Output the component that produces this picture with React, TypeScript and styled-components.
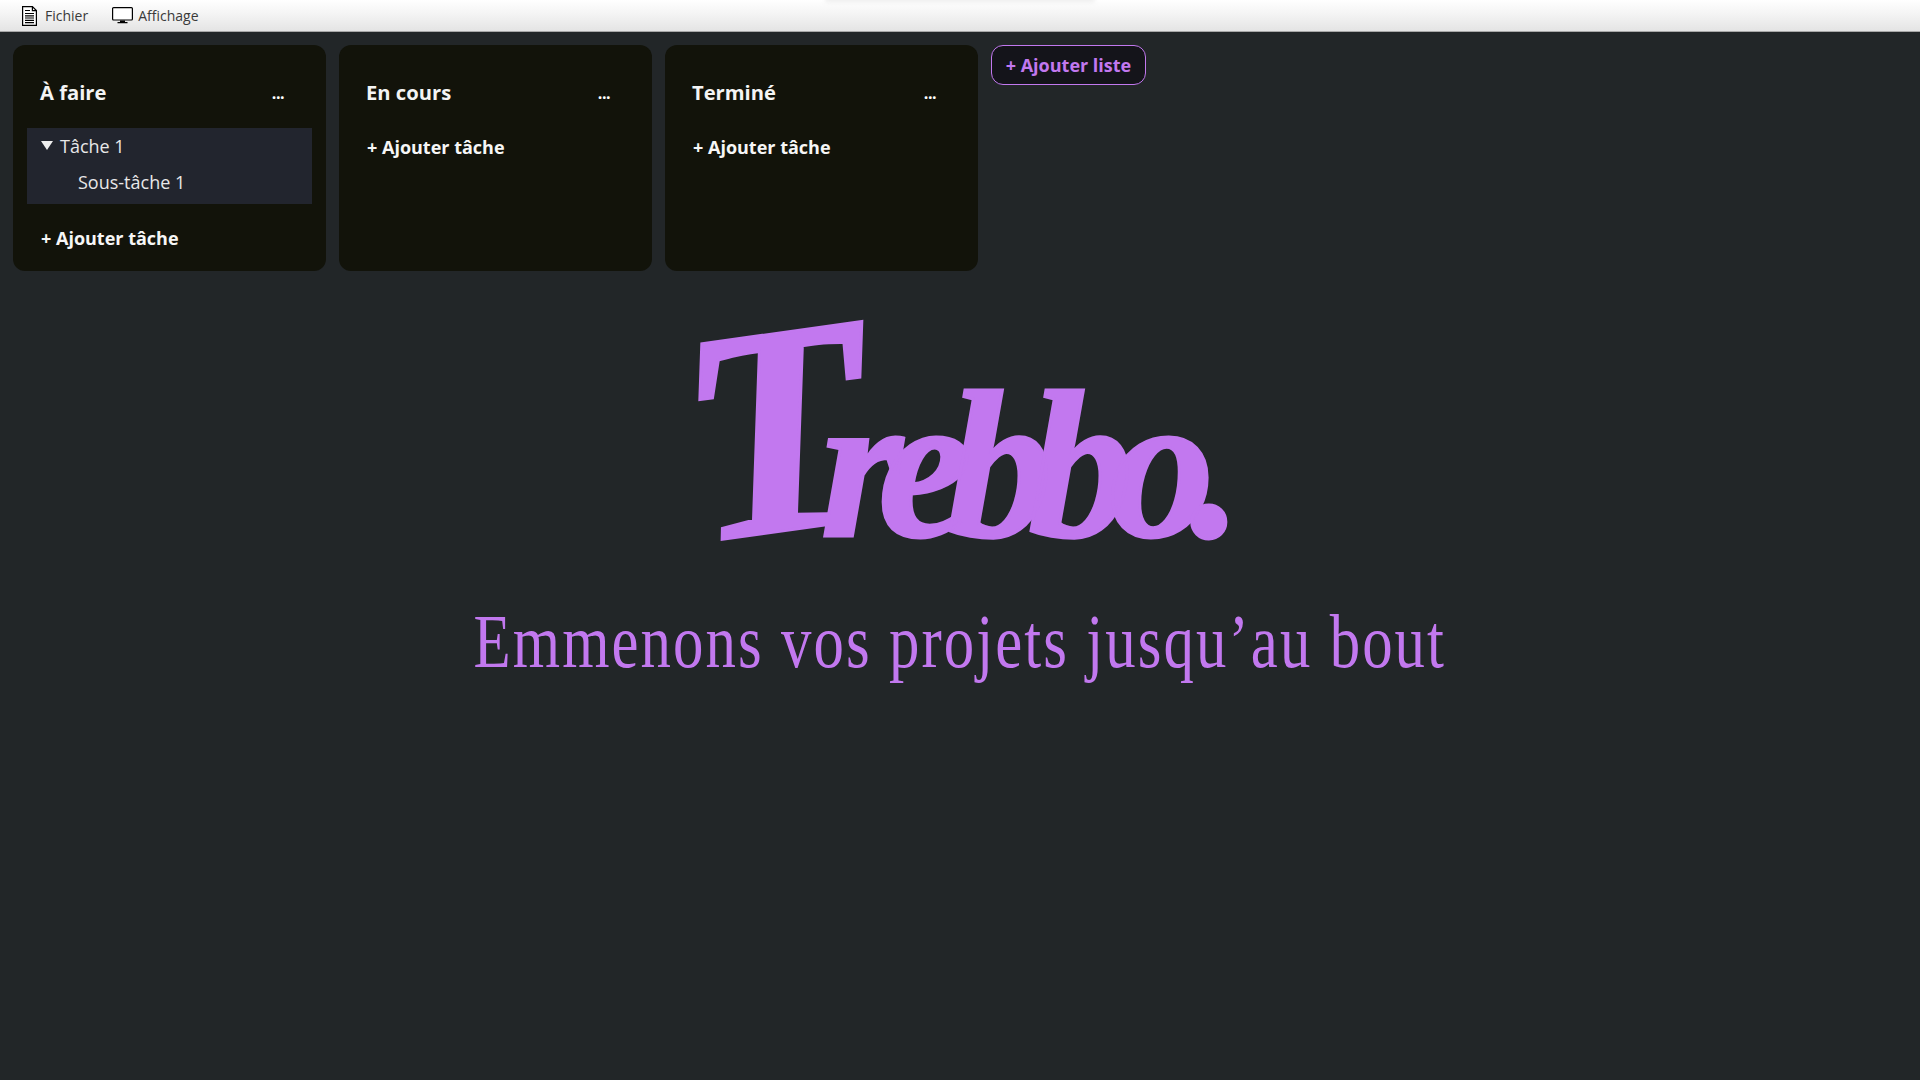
import React from "react";
import styled, { createGlobalStyle } from "styled-components";

const Global = createGlobalStyle`
  html, body { margin: 0; padding: 0; background: #222628; }
  body { min-height: 1080px; font-family: "Open Sans", "Noto Sans", sans-serif; overflow: hidden; }
`;

const Page = styled.div`
  width: 1920px;
  height: 1080px;
  display: flex;
  flex-direction: column;
  background: #222628;
`;

const MenuBar = styled.header`
  position: relative;
  height: 31px;
  flex: none;
  display: flex;
  align-items: center;
  gap: 24px;
  padding-left: 22px;
  background: linear-gradient(#ffffff, #f4f4f4 45%, #e4e4e4);
  border-bottom: 1px solid #a8a8a8;
  overflow: hidden;
`;

const TopGlow = styled.div`
  position: absolute;
  left: 825px;
  top: -3px;
  width: 270px;
  height: 5px;
  border-radius: 3px;
  background: #ececec;
  filter: blur(2px);
`;

const MenuItem = styled.div<{ $tight?: boolean }>`
  display: flex;
  align-items: center;
  gap: ${(p) => (p.$tight ? "5px" : "8px")};
  font-size: 14px;
  color: #3a3a3a;
`;

const Board = styled.main`
  display: flex;
  align-items: flex-start;
  gap: 13px;
  padding: 13px 13px 0;
`;

const Column = styled.section`
  width: 313px;
  height: 226px;
  box-sizing: border-box;
  padding: 0 14px;
  border-radius: 12px;
  background: #12130a;
  color: #fff;
`;

const ColumnHead = styled.div`
  height: 83px;
  box-sizing: border-box;
  padding: 11px 28px 0 13px;
  display: flex;
  align-items: center;
  justify-content: space-between;
`;

const ColumnTitle = styled.h2`
  margin: 0;
  font-size: 20.2px;
  line-height: 28px;
  font-weight: 700;
  color: #f4f4f4;
`;

const MoreDots = styled.span`
  font-size: 16px;
  font-weight: 700;
  line-height: 16px;
  margin-top: 2px;
  letter-spacing: -0.5px;
`;

const TaskBox = styled.div`
  width: 285px;
  height: 76px;
  box-sizing: border-box;
  padding-top: 3px;
  background: #22252e;
  font-size: 18px;
  color: #e8e8e8;
`;

const TaskRow = styled.div`
  display: flex;
  align-items: center;
  gap: 7px;
  height: 30px;
  padding-left: 14px;
`;

const Caret = styled.span`
  width: 0;
  height: 0;
  border-left: 6px solid transparent;
  border-right: 6px solid transparent;
  border-top: 9px solid #eee;
  margin-bottom: 1px;
`;

const SubTask = styled.div`
  height: 36px;
  line-height: 43px;
  padding-left: 51px;
`;

const AddTask = styled.button<{ $first?: boolean }>`
  display: block;
  border: 0;
  background: none;
  padding: 0;
  margin: ${(p) => (p.$first ? "5px 0 0 14px" : "20px 0 0 14px")};
  font: 700 18px/28px "Open Sans", sans-serif;
  color: #f6f6f6;
`;

const AddList = styled.button`
  width: 155px;
  height: 40px;
  box-sizing: border-box;
  border: 1.5px solid #c278ef;
  border-radius: 12px;
  background: #14141a;
  color: #c278ef;
  font: 700 18px/26px "Open Sans", sans-serif;
  padding: 0;
  white-space: nowrap;
`;

const Hero = styled.div`
  display: flex;
  flex-direction: column;
  align-items: center;
  color: #c278ef;
`;

const Logo = styled.h1`
  height: 270px;
  margin: 9px 0 0;
  display: flex;
  align-items: flex-end;
  font: italic 700 210px/1 "Liberation Serif", serif;
  -webkit-text-stroke: 3px #c278ef;
  white-space: nowrap;
`;

const BigT = styled.span`
  display: inline-block;
  font-size: 300px;
  line-height: 240px;
  margin-right: -46px;
  transform: rotate(-8deg);
`;

const LogoRest = styled.span`
  display: inline-block;
  line-height: 170px;
  letter-spacing: -24px;
  padding-right: 18px;
`;

const Tagline = styled.p`
  margin: 48px 0 0;
  font: 400 76px/86px "Liberation Serif", serif;
  letter-spacing: 2.6px;
  white-space: nowrap;
  transform: scaleX(0.8);
`;

const DocIcon = () => (
  <svg width="15" height="20" viewBox="0 0 15 20" fill="none" stroke="#000" strokeWidth="1.2">
    <path d="M.6.6h9.8l4 4v14.8H.6z" fill="#fff" />
    <path d="M10.4.6v4h4M3 4.5h5M3 7.5h9M3 9.8h9M3 12h9M3 14.3h9M3 16.6h9" />
  </svg>
);

const MonitorIcon = () => (
  <svg width="21" height="17" viewBox="0 0 21 17" fill="none">
    <rect x="0.6" y="0.6" width="19.8" height="12.4" rx="1" stroke="#000" strokeWidth="1.2" fill="#fff" />
    <path d="M8 13.5h5v1.5h2.5v1.2h-10V15H8z" fill="#000" />
  </svg>
);

const lists = ["À faire", "En cours", "Terminé"];

export default function App() {
  return (
    <Page>
      <Global />
      <MenuBar>
        <TopGlow />
        <MenuItem><DocIcon />Fichier</MenuItem>
        <MenuItem $tight><MonitorIcon />Affichage</MenuItem>
      </MenuBar>
      <Board>
        {lists.map((name, i) => (
          <Column key={name}>
            <ColumnHead>
              <ColumnTitle>{name}</ColumnTitle>
              <MoreDots>...</MoreDots>
            </ColumnHead>
            {i === 0 && (
              <TaskBox>
                <TaskRow><Caret />Tâche 1</TaskRow>
                <SubTask>Sous-tâche 1</SubTask>
              </TaskBox>
            )}
            <AddTask $first={i !== 0}>+ Ajouter tâche</AddTask>
          </Column>
        ))}
        <AddList>+ Ajouter liste</AddList>
      </Board>
      <Hero>
        <Logo><BigT>T</BigT><LogoRest>rebbo.</LogoRest></Logo>
        <Tagline>Emmenons vos projets jusqu’au bout</Tagline>
      </Hero>
    </Page>
  );
}
